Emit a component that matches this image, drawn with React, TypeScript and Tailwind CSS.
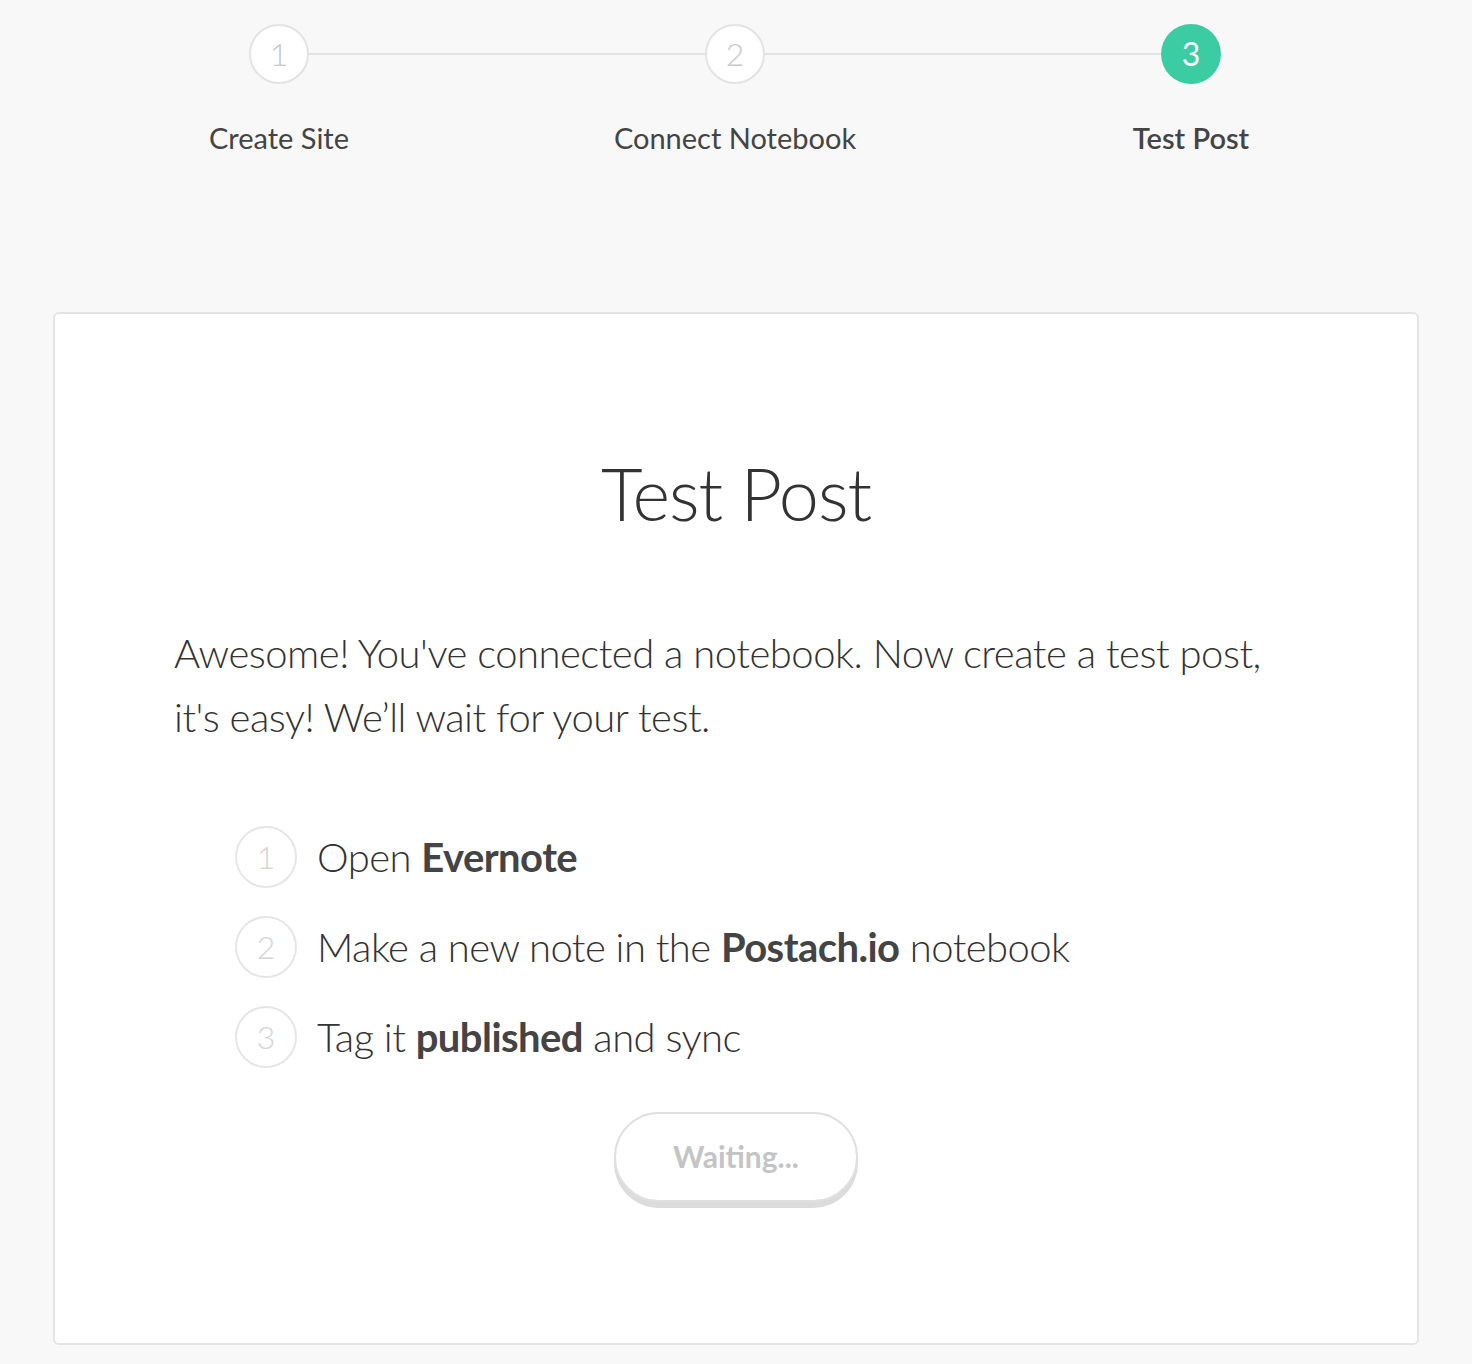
const steps = [
  { n: 1, label: "Create Site" },
  { n: 2, label: "Connect Notebook" },
  { n: 3, label: "Test Post" },
];

function Stepper() {
  return (
    <div className="relative -ml-[2px] grid grid-cols-3 pt-6">
      <div className="absolute left-[16.66%] right-[16.66%] top-[53px] h-[2px] bg-[#e3e3e3]" />
      {steps.map((s) => {
        const active = s.n === 3;
        return (
          <div key={s.n} className="relative flex flex-col items-center">
            {active ? (
              <div className="flex h-[60px] w-[60px] items-center justify-center rounded-full bg-[#3ccca3] text-[32px] font-normal text-white">
                {s.n}
              </div>
            ) : (
              <div className="flex h-[60px] w-[60px] items-center justify-center rounded-full border-2 border-[#e3e3e3] bg-white text-[32px] font-light text-[#c8c8c8]">
                {s.n}
              </div>
            )}
            <div
              className={
                "mt-[32px] text-[29px] text-[#444] " +
                (active ? "font-semibold" : "font-normal")
              }
            >
              {s.label}
            </div>
          </div>
        );
      })}
    </div>
  );
}

function ListItem({ n, children }: { n: number; children: React.ReactNode }) {
  return (
    <li className="flex h-[90px] items-center">
      <span className="flex h-[62px] w-[62px] shrink-0 items-center justify-center rounded-full border-2 border-[#e6e6e6] text-[32px] font-light text-[#d4d4d4]">
        {n}
      </span>
      <span className="ml-[20px] text-[40px] font-light tracking-[-0.55px] text-[#333]">
        {children}
      </span>
    </li>
  );
}

export default function App() {
  return (
    <main
      className="min-h-screen bg-[#f8f8f8] pb-5"
      style={{ fontFamily: "Lato, 'Open Sans', sans-serif" }}
    >
      <div className="mx-auto w-[1366px]">
        <Stepper />

        <section className="mt-[152px] rounded-md border-2 border-[#e4e4e4] bg-white px-[119px] pb-[141px] pt-[143px]">
          <h1 className="text-center text-[72px] font-light leading-none tracking-[-1.1px] text-[#333]">
            Test Post
          </h1>

          <p className="mt-[92px] text-[40px] font-light leading-[64px] tracking-[-0.5px] text-[#333]">
            Awesome! You've connected a notebook. Now create a test post, it's easy! We’ll wait for
            your test.
          </p>

          <ul className="mt-[63px] pl-[61px]">
            <ListItem n={1}>
              Open <strong className="font-bold text-[#444]">Evernote</strong>
            </ListItem>
            <ListItem n={2}>
              Make a new note in the <strong className="font-bold text-[#444]">Postach.io</strong>{" "}
              notebook
            </ListItem>
            <ListItem n={3}>
              Tag it <strong className="font-bold text-[#444]">published</strong> and sync
            </ListItem>
          </ul>

          <div className="mt-[30px] flex justify-center">
            <button className="h-[90px] w-[244px] rounded-full border-2 border-[#e0e0e0] bg-white text-[30px] font-bold text-[#c4c4c4] shadow-[0_6px_0_#dcdcdc]">
              Waiting...
            </button>
          </div>
        </section>
      </div>
    </main>
  );
}
